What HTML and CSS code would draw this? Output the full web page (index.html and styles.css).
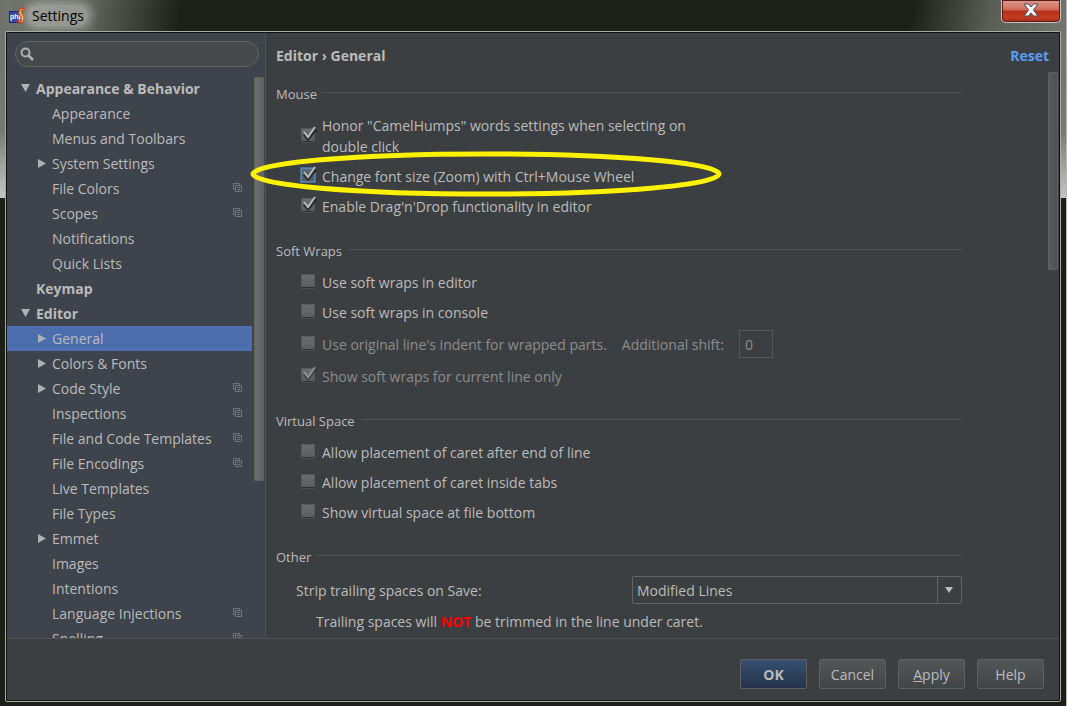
FILE: index.html
```
<!DOCTYPE html>
<html lang="en">
<head>
    <meta charset="UTF-8">
    <meta name="viewport" content="width=device-width, initial-scale=1.0">
    <title>Settings</title>
    <link rel="stylesheet" href="styles.css">
</head>
<body>
    <svg class="defs" aria-hidden="true">
        <symbol id="copy" viewBox="0 0 10 10">
            <path d="M2 6.5H.5V.5H6.5V2M2.500 2.500H8.500V8.500H2.500ZM4 4.500H7M4 6.500H7" fill="none" stroke="currentColor"/>
        </symbol>
    </svg>

    <div class="window">
        <!-- Title bar -->
        <header class="titlebar">
            <svg class="logo" viewBox="0 0 17 17" aria-hidden="true">
                <defs>
                    <linearGradient id="flame" x1="0" y1="0" x2="0" y2="1">
                        <stop offset="0" stop-color="#c8200c"/>
                        <stop offset=".4" stop-color="#ff9a1c"/>
                        <stop offset="1" stop-color="#e8420c"/>
                    </linearGradient>
                </defs>
                <rect x=".5" y="4.500" width="11" height="11" fill="#3a46a4" stroke="#1e2a80"/>
                <text x="1" y="12" class="logo-text">php</text>
                <path d="M15 0C11 1 9 4 10 7C11 10 13 11 12 13C11 14 10 14 8 13L9 16C13 17 16 14 15 10C14 8 12 6 13 4C13 3 15 3 16 4Z" fill="url(#flame)" stroke="#a82a08" stroke-width=".6"/>
                <path d="M13 2C10 4 11 7 13 9C14 11 14 13 12 15" fill="none" stroke="#ffd04a"/>
            </svg>
            <span class="title">Settings</span>
            <button class="close" aria-label="Close">
                <svg viewBox="0 0 16 14" width="16" height="14" aria-hidden="true">
                    <path d="M1 1H5.500L8 4L10.500 1H15L10.500 7L15 13H10.500L8 10L5.500 13H1L5.500 7Z" fill="#f4f4f4" stroke="#4a4c5c"/>
                </svg>
            </button>
        </header>

        <div class="dialog">
            <div class="main">
                <!-- Left tree -->
                <nav class="sidebar">
                    <div class="search">
                        <svg viewBox="0 0 14 14" width="14" height="14" aria-hidden="true">
                            <circle cx="5.500" cy="5.500" r="4" fill="none" stroke="#afb1b3" stroke-width="2"/>
                            <path d="M8.500 8.500L13 13" stroke="#afb1b3" stroke-width="2.500"/>
                        </svg>
                        <input type="text" aria-label="Search settings">
                    </div>
                    <div class="tree-wrap">
                        <ul class="tree">
                            <li><a href="#" class="group open">Appearance &amp; Behavior</a></li>
                            <li><a href="#">Appearance</a></li>
                            <li><a href="#">Menus and Toolbars</a></li>
                            <li><a href="#" class="closed">System Settings</a></li>
                            <li><a href="#">File Colors<svg class="copy"><use href="#copy"/></svg></a></li>
                            <li><a href="#">Scopes<svg class="copy"><use href="#copy"/></svg></a></li>
                            <li><a href="#">Notifications</a></li>
                            <li><a href="#">Quick Lists</a></li>
                            <li><a href="#" class="group">Keymap</a></li>
                            <li><a href="#" class="group open">Editor</a></li>
                            <li><a href="#" class="closed selected">General</a></li>
                            <li><a href="#" class="closed">Colors &amp; Fonts</a></li>
                            <li><a href="#" class="closed">Code Style<svg class="copy"><use href="#copy"/></svg></a></li>
                            <li><a href="#">Inspections<svg class="copy"><use href="#copy"/></svg></a></li>
                            <li><a href="#">File and Code Templates<svg class="copy"><use href="#copy"/></svg></a></li>
                            <li><a href="#">File Encodings<svg class="copy"><use href="#copy"/></svg></a></li>
                            <li><a href="#">Live Templates</a></li>
                            <li><a href="#">File Types</a></li>
                            <li><a href="#" class="closed">Emmet</a></li>
                            <li><a href="#">Images</a></li>
                            <li><a href="#">Intentions</a></li>
                            <li><a href="#">Language Injections<svg class="copy"><use href="#copy"/></svg></a></li>
                            <li><a href="#">Spelling<svg class="copy"><use href="#copy"/></svg></a></li>
                        </ul>
                        <div class="scrollbar"><div class="thumb tree-thumb"></div></div>
                    </div>
                </nav>

                <!-- Right panel -->
                <section class="panel">
                    <div class="panel-head">
                        <h1>Editor › General</h1>
                        <a href="#" class="reset">Reset</a>
                    </div>
                    <div class="panel-body">
                        <form class="form">
                            <fieldset>
                                <legend>Mouse</legend>
                                <label class="row two-lines"><input type="checkbox" checked><span>Honor "CamelHumps" words settings when selecting on<br>double click</span></label>
                                <label class="row"><input type="checkbox" class="focused" checked><span>Change font size (Zoom) with Ctrl+Mouse Wheel</span></label>
                                <label class="row"><input type="checkbox" checked><span>Enable Drag'n'Drop functionality in editor</span></label>
                            </fieldset>

                            <fieldset>
                                <legend>Soft Wraps</legend>
                                <label class="row"><input type="checkbox"><span>Use soft wraps in editor</span></label>
                                <label class="row"><input type="checkbox"><span>Use soft wraps in console</span></label>
                                <div class="row tall disabled">
                                    <input type="checkbox" id="indent" disabled>
                                    <label for="indent">Use original line's indent for wrapped parts.</label>
                                    <label for="shift" class="shift-label">Additional shift:</label>
                                    <input type="text" id="shift" class="shift" value="0" disabled>
                                </div>
                                <label class="row tall disabled"><input type="checkbox" checked disabled><span>Show soft wraps for current line only</span></label>
                            </fieldset>

                            <fieldset>
                                <legend>Virtual Space</legend>
                                <label class="row"><input type="checkbox"><span>Allow placement of caret after end of line</span></label>
                                <label class="row"><input type="checkbox"><span>Allow placement of caret inside tabs</span></label>
                                <label class="row"><input type="checkbox"><span>Show virtual space at file bottom</span></label>
                            </fieldset>

                            <fieldset>
                                <legend>Other</legend>
                                <div class="strip">
                                    <label for="strip">Strip trailing spaces on Save:</label>
                                    <select id="strip">
                                        <option>Modified Lines</option>
                                        <option>All</option>
                                        <option>None</option>
                                    </select>
                                </div>
                                <p class="note">Trailing spaces will <b>NOT</b> be trimmed in the line under caret.</p>
                            </fieldset>
                        </form>
                        <div class="scrollbar"><div class="thumb panel-thumb"></div></div>
                    </div>
                </section>
            </div>

            <!-- Buttons -->
            <footer class="buttons">
                <button class="btn primary">OK</button>
                <button class="btn">Cancel</button>
                <button class="btn"><u>A</u>pply</button>
                <button class="btn">Help</button>
            </footer>
        </div>

        <!-- Yellow marker around the zoom option -->
        <svg class="marker" viewBox="0 0 472 46" aria-hidden="true">
            <ellipse cx="236" cy="23" rx="233" ry="20" fill="none" stroke="#fff200" stroke-width="5"/>
        </svg>
    </div>
</body>
</html>
```
FILE: styles.css
```
* {
    box-sizing: border-box;
}

body {
    margin: 0;
    font-family: "Open Sans", "Noto Sans", sans-serif;
    font-size: 14px;
    line-height: 21px;
    color: #bbbbbb;
    background: #1c2018;
}

input, select, button {
    font: inherit;
    color: inherit;
}

.defs {
    display: none;
}

/* Window frame */
.window {
    position: relative;
    display: flex;
    flex-direction: column;
    height: 100vh;
    padding: 0 5px 4px 5px;
    border-right: 1px solid #b4b7b0;
    background:
        linear-gradient(to bottom, #6f726c, #777a74 130px, #c4c6c3 198px, transparent 198px) left / 5px 100% no-repeat,
        linear-gradient(to bottom, #6f726c, #777a74 130px, #c4c6c3 198px, transparent 198px) right / 5px 100% no-repeat,
        linear-gradient(100deg, #73756f 0, #62655e 90px, #1c2018 180px, #1c2018 900px, #5c5f58 980px, #73766f 100%) top / 100% 32px no-repeat,
        #1c2018;
}

.titlebar {
    display: flex;
    align-items: flex-start;
    height: 31px;
    padding-left: 4px;
}

.logo {
    width: 17px;
    height: 17px;
    margin-top: 7px;
}

.logo-text {
    font: bold 7px "Liberation Sans", sans-serif;
    fill: #fff;
}

.title {
    margin: 5px 0 0 2px;
    padding: 0 4px;
    color: #000;
    border-radius: 10px;
    background: rgba(190, 192, 188, 0.55);
    box-shadow: 0 0 8px 4px rgba(190, 192, 188, 0.55);
}

.close {
    display: flex;
    justify-content: center;
    align-items: center;
    width: 60px;
    height: 23px;
    margin-left: auto;
    padding: 0 0 2px;
    border: 1px solid #c9c4c0;
    border-top: 0;
    border-radius: 0 0 5px 5px;
    background: linear-gradient(#dc9a8c, #cf6a58 45%, #b82e18 50%, #c23c22 80%, #a02a18);
    box-shadow: inset 0 0 0 1px #5a1c14;
}

.dialog {
    display: flex;
    flex-direction: column;
    flex: 1;
    min-height: 0;
    border: 1px solid #a9aba2;
    outline: 1px solid #101210;
    outline-offset: -2px;
    padding: 1px;
    border-radius: 2px;
    background: #3c3f41;
}

.main {
    display: flex;
    flex: 1;
    min-height: 0;
}

/* Sidebar */
.sidebar {
    display: flex;
    flex-direction: column;
    width: 259px;
    border-right: 1px solid #515356;
    background: #3e434c;
}

.search {
    display: flex;
    align-items: center;
    height: 26px;
    margin: 8px 6px 9px 8px;
    padding: 0 4px;
    border: 1px solid #646464;
    border-radius: 13px;
    background: #45494a;
}

.search input {
    flex: 1;
    min-width: 0;
    border: 0;
    background: none;
    outline: none;
}

.tree-wrap {
    display: flex;
    flex: 1;
    min-height: 0;
}

.tree {
    flex: 1;
    margin: 0;
    padding: 0;
    list-style: none;
    overflow: hidden;
}

.tree a {
    display: flex;
    align-items: center;
    position: relative;
    height: 25px;
    padding: 0 9px 0 45px;
    color: #bbbbbb;
    text-decoration: none;
}

.tree .group {
    padding-left: 29px;
    font-weight: bold;
}

.tree .selected {
    background: #4b6eaf;
}

/* Tree arrows */
.open::before,
.closed::before {
    content: "";
    position: absolute;
    background: #afb1b3;
}

.open::before {
    left: 14px;
    top: 8px;
    width: 9px;
    height: 8px;
    clip-path: polygon(0 0, 100% 0, 50% 100%);
}

.closed::before {
    left: 31px;
    top: 8px;
    width: 8px;
    height: 9px;
    clip-path: polygon(0 0, 100% 50%, 0 100%);
}

.copy {
    width: 10px;
    height: 10px;
    margin: 0 0 2px auto;
    color: #71757a;
}

.scrollbar {
    width: 12px;
    padding: 1px 1px 0;
}

.tree-wrap .scrollbar {
    width: 13px;
    padding-left: 2px;
}

.thumb {
    border: 1px solid #5e6062;
    border-radius: 1px;
    background: linear-gradient(to right, #6e6e6e, #606162);
}

.tree-thumb {
    height: 72%;
}

.panel-thumb {
    height: 35%;
    background: linear-gradient(to right, #595a5b, #4f5051);
}

/* Panel */
.panel {
    display: flex;
    flex-direction: column;
    flex: 1;
    min-width: 0;
}

.panel-head {
    display: flex;
    justify-content: space-between;
    align-items: center;
    height: 38px;
    padding: 6px 10px 0;
}

h1 {
    margin: 0;
    font-size: 14px;
}

.reset {
    color: #589df6;
    font-weight: bold;
    text-decoration: none;
}

.panel-body {
    display: flex;
    flex: 1;
    min-height: 0;
}

.form {
    display: flex;
    flex-direction: column;
    gap: 20px;
    flex: 1;
    padding: 13px 85px 0 10px;
    overflow: hidden;
}

fieldset {
    min-width: 0;
    margin: 0;
    padding: 0;
    border: 0;
}

legend {
    display: flex;
    align-items: center;
    gap: 6px;
    width: 100%;
    height: 20px;
    margin-bottom: 6px;
    padding: 0;
    font-size: 13px;
    line-height: 20px;
}

legend::after {
    content: "";
    flex: 1;
    height: 1px;
    margin-bottom: 3px;
    background: #515456;
}

.row {
    display: flex;
    align-items: center;
    gap: 7px;
    height: 30px;
    padding-left: 25px;
}

.two-lines {
    height: 51px;
}

.tall {
    height: 32px;
    padding-top: 2px;
}

.disabled {
    color: #8c8c8c;
}

/* Checkboxes */
input[type="checkbox"] {
    appearance: none;
    position: relative;
    flex: none;
    width: 14px;
    height: 14px;
    margin: 0 0 2px;
    border: 1px solid #56585a;
    border-bottom-color: #2e3032;
    background: linear-gradient(#6a6b6c, #5c5d5e);
    box-shadow: 0 1px 0 #4c4f51;
}

input[type="checkbox"]:checked::after {
    content: "";
    position: absolute;
    left: 0;
    top: -3px;
    width: 15px;
    height: 15px;
    background: url("data:image/svg+xml,%3Csvg xmlns='http://www.w3.org/2000/svg' viewBox='0 0 15 15'%3E%3Cpath d='M2 8L6 13L14 3' fill='none' stroke='%23282a2c' stroke-width='3'/%3E%3Cpath d='M2 6L6 11L13 1' fill='none' stroke='%23bcbcbc' stroke-width='2'/%3E%3C/svg%3E") no-repeat;
}

input[type="checkbox"]:disabled::after {
    opacity: 0.5;
}

input[type="checkbox"].focused {
    border-color: #5e87b4;
    background: linear-gradient(#5a6878, #4c5866);
    box-shadow: 0 0 0 1px #466d94;
}

.shift-label {
    margin-left: 8px;
}

.shift {
    width: 34px;
    height: 28px;
    margin-left: 8px;
    padding: 0 5px;
    border: 1px solid #555759;
    background: none;
}

.strip {
    display: flex;
    justify-content: space-between;
    align-items: center;
    height: 34px;
    padding-left: 20px;
}

select {
    appearance: none;
    width: 330px;
    height: 28px;
    padding: 0 28px 0 4px;
    border: 1px solid #646464;
    border-radius: 2px;
    background:
        url("data:image/svg+xml,%3Csvg xmlns='http://www.w3.org/2000/svg' viewBox='0 0 8 6'%3E%3Cpath d='M0 0H8L4 6Z' fill='%23bbbbbb'/%3E%3C/svg%3E") right 8px center / 8px 6px no-repeat,
        linear-gradient(#646464, #646464) right 23px center / 1px 100% no-repeat,
        #3c3f41;
}

.note {
    margin: 0;
    padding-left: 40px;
    line-height: 30px;
}

.note b {
    color: #ff0000;
}

/* Buttons */
.buttons {
    display: flex;
    justify-content: flex-end;
    gap: 12px;
    padding: 20px 15px 11px;
    border-top: 1px solid #515151;
}

.btn {
    width: 67px;
    height: 30px;
    padding: 0;
    border: 1px solid #5e6060;
    border-radius: 2px;
    background: linear-gradient(#525658, #414546);
}

.primary {
    font-weight: bold;
    background: linear-gradient(#365072, #263349);
}

.marker {
    position: absolute;
    left: 250px;
    top: 151px;
    width: 472px;
    height: 46px;
    pointer-events: none;
}
```
